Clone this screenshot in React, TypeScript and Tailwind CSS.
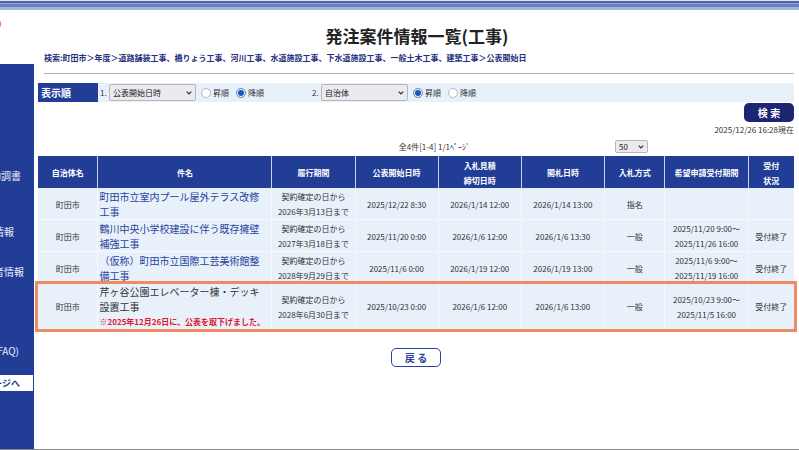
import React from "react";

type Row = {
  city: string;
  title: string;
  link: boolean;
  note?: string;
  until: string;
  published: string;
  deadline: string;
  opening: string;
  method: string;
  period?: [string, string];
  status: string;
};

const rows: Row[] = [
  { city: "町田市", title: "町田市立室内プール屋外テラス改修工事", link: true, until: "2026年3月13日まで", published: "2025/12/22 8:30", deadline: "2026/1/14 12:00", opening: "2026/1/14 13:00", method: "指名", status: "" },
  { city: "町田市", title: "鶴川中央小学校建設に伴う既存擁壁補強工事", link: true, until: "2027年3月18日まで", published: "2025/11/20 0:00", deadline: "2026/1/6 12:00", opening: "2026/1/6 13:30", method: "一般", period: ["2025/11/20 9:00～", "2025/11/26 16:00"], status: "受付終了" },
  { city: "町田市", title: "（仮称）町田市立国際工芸美術館整備工事", link: true, until: "2028年9月29日まで", published: "2025/11/6 0:00", deadline: "2026/1/19 12:00", opening: "2026/1/19 13:00", method: "一般", period: ["2025/11/6 9:00～", "2025/11/19 16:00"], status: "受付終了" },
  { city: "町田市", title: "芹ヶ谷公園エレベーター棟・デッキ設置工事", link: false, note: "※2025年12月26日に、公表を取下げました。", until: "2028年6月30日まで", published: "2025/10/23 0:00", deadline: "2026/1/6 12:00", opening: "2026/1/6 13:00", method: "一般", period: ["2025/10/23 9:00～", "2025/11/5 16:00"], status: "受付終了" },
];

function Select({ id, label, options, className }: { id: string; label: string; options: string[]; className: string }) {
  return (
    <span className={`relative inline-flex items-center ${className}`}>
      <select id={id} aria-label={label} className="h-full w-full appearance-none rounded-[2px] border border-[#b5b5bd] bg-[#ebeaee] pl-[3px] text-[8px] leading-none text-[#222]">
        {options.map((o) => (
          <option key={o}>{o}</option>
        ))}
      </select>
      <svg className="pointer-events-none absolute right-1 h-[4px] w-[6px]" viewBox="0 0 6 4" fill="none" stroke="#333" strokeWidth="1.2" aria-hidden="true">
        <path d="M0.7 0.7 3 3 5.3 0.7" />
      </svg>
    </span>
  );
}

function Radio({ name, text, checked }: { name: string; text: string; checked?: boolean }) {
  return (
    <label className="flex items-center gap-[2px]">
      <input
        type="radio"
        name={name}
        defaultChecked={checked}
        className="size-[10px] appearance-none rounded-full border border-[#b4b8c2] bg-white checked:border-[#6a93cf] checked:bg-[#1757b5] checked:shadow-[inset_0_0_0_1px_white]"
      />
      {text}
    </label>
  );
}

function SideLink({ text, className }: { text: string; className: string }) {
  return (
    <a href="#" className={`flex h-10 items-center justify-end whitespace-nowrap text-[10px] ${className}`}>
      {text}
    </a>
  );
}

const cell = "border-r border-[#f6f9fd] last:border-r-0";
const head = "border-r border-[#c9d3ec] p-0 pt-[1px] font-bold last:border-r-0";

export default function App() {
  return (
    <div className="flex min-h-screen flex-col overflow-hidden border-b border-[#8a8a8a] bg-white font-['Noto_Sans_CJK_JP','Noto_Sans',sans-serif] text-[8px] leading-[15px] text-[#333]">
      <div className="h-[10px] border-t border-[#e3e6ee] bg-[#a3b4de]">
        <div className="h-[2px] bg-[#4865b0]" />
        <div className="h-[1px] bg-[#8fa2d6]" />
        <div className="h-[3px] bg-[#7080b8]" />
      </div>
      <div className="flex flex-1">
        <aside className="flex w-[34px] shrink-0 flex-col overflow-hidden">
          <div className="flex h-[54px] items-start pt-[8px]">
            <span className="-ml-[11px] size-[12px] rounded-full bg-[#f0607a]" />
          </div>
          <nav className="flex flex-1 flex-col bg-[#213d96] text-[#e8ecf8]">
            <SideLink text="約調書" className="mt-[91px] pr-[13px]" />
            <SideLink text="情報" className="mt-4 pr-5" />
            <SideLink text="者情報" className="pr-[10px]" />
            <SideLink text="(FAQ)" className="mt-[39px] pr-[15px]" />
            <a href="#" className="mt-[5px] mr-[1px] flex h-4 items-center justify-end bg-white pr-[13px] text-[9px] font-bold whitespace-nowrap text-[#213d96]">ページへ</a>
          </nav>
        </aside>
        <main className="flex min-w-0 flex-1 flex-col pr-[5px] pl-1">
          <header className="ml-[6px] border-b border-[#b5adbd] pt-[12px] pb-[8px]">
            <h1 className="pr-1 text-center text-[17px] leading-[28px] font-bold text-[#222]">発注案件情報一覧(工事)</h1>
            <p className="mt-[1px] leading-[14px] font-bold text-[#262f7d]">検索:町田市＞年度＞道路舗装工事、橋りょう工事、河川工事、水道施設工事、下水道施設工事、一般土木工事、建築工事＞公表開始日</p>
          </header>
          <form className="mt-[9px] flex flex-col" onSubmit={(e) => e.preventDefault()}>
            <div className="flex h-[19px] items-center bg-[#e8f0fa]">
              <div className="flex h-full w-[60px] items-center bg-[#213d96] pl-[3px] text-[10px] font-bold text-white">表示順</div>
              <label htmlFor="sort1" className="w-[11px] pl-[2px]">1.</label>
              <Select id="sort1" label="表示順 1" options={["公表開始日時", "自治体"]} className="h-[17px] w-[87px]" />
              <div className="ml-[5px] flex gap-[7px]">
                <Radio name="order1" text="昇順" />
                <Radio name="order1" text="降順" checked />
              </div>
              <label htmlFor="sort2" className="ml-12 w-[9px]">2.</label>
              <Select id="sort2" label="表示順 2" options={["自治体", "公表開始日時"]} className="h-[17px] w-[87px]" />
              <div className="ml-[5px] flex gap-[7px]">
                <Radio name="order2" text="昇順" checked />
                <Radio name="order2" text="降順" />
              </div>
            </div>
            <button type="submit" className="mt-[1px] h-[19px] w-[50px] self-end rounded-[5px] bg-[#1c2571] text-[10px] font-bold text-white">検 索</button>
            <p className="self-end">2025/12/26 16:28現在</p>
            <div className="flex h-[19px] items-center">
              <p className="flex-1 text-right">全4件[1-4] 1/1ﾍﾟｰｼﾞ</p>
              <div className="flex w-[324px] pl-[145px]">
                <Select id="size" label="表示件数" options={["50", "100"]} className="h-[13px] w-[33px]" />
              </div>
            </div>
          </form>
          <table className="w-full table-fixed border-separate border-spacing-0 text-center">
            <colgroup>
              <col className="w-[8%]" />
              <col className="w-[23%]" />
              <col className="w-[11%]" />
              <col className="w-[11%]" />
              <col className="w-[11%]" />
              <col className="w-[11%]" />
              <col className="w-[8%]" />
              <col className="w-[11%]" />
              <col className="w-[6%]" />
            </colgroup>
            <thead className="bg-[#213d96] text-white">
              <tr className="h-8">
                <th className={head}>自治体名</th>
                <th className={head}>件名</th>
                <th className={head}>履行期間</th>
                <th className={head}>公表開始日時</th>
                <th className={head}>入札見積<br />締切日時</th>
                <th className={head}>開札日時</th>
                <th className={head}>入札方式</th>
                <th className={head}>希望申請受付期間</th>
                <th className={head}>受付<br />状況</th>
              </tr>
            </thead>
            <tbody className="bg-[#e8f0fa]">
              {rows.map((r) => {
                const td = r.note ? `${cell} p-0` : `${cell} border-b p-0 pt-[1px]`;
                return (
                  <tr key={r.title} className={r.note ? "outline-[3px] outline-[#ef8a62]" : "h-8"}>
                    <td className={td}>{r.city}</td>
                    <td className={`${td} text-left`}>
                      <div className="pr-[9px] pl-[1px] text-[10px]">
                        {r.link ? <a href="#" className="text-[#27439c]">{r.title}</a> : r.title}
                      </div>
                      {r.note && <div className="pl-[1px] font-bold whitespace-nowrap text-[#dc1633]">{r.note}</div>}
                    </td>
                    <td className={td}>契約確定の日から<br />{r.until}</td>
                    <td className={td}>{r.published}</td>
                    <td className={td}>{r.deadline}</td>
                    <td className={td}>{r.opening}</td>
                    <td className={td}>{r.method}</td>
                    <td className={td}>{r.period && <>{r.period[0]}<br />{r.period[1]}</>}</td>
                    <td className={td}>{r.status}</td>
                  </tr>
                );
              })}
            </tbody>
          </table>
          <button type="button" className="mt-[19px] h-[19px] w-[50px] self-center rounded-[5px] border border-[#27439c] bg-white text-[10px] leading-none font-bold text-[#27439c]">戻 る</button>
        </main>
      </div>
    </div>
  );
}
